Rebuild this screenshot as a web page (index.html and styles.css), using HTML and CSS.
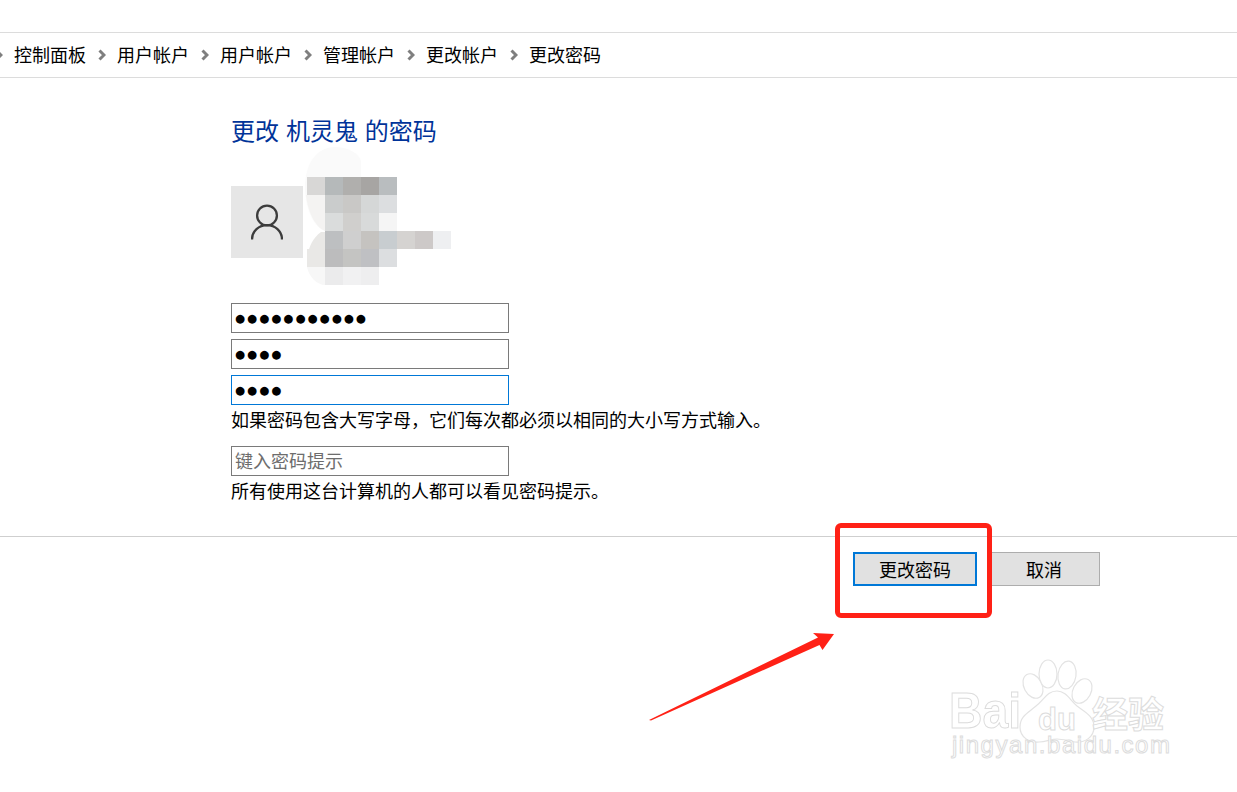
FILE: index.html
```html
<!DOCTYPE html>
<html lang="zh-CN">
<head>
<meta charset="utf-8">
<title>更改密码</title>
<link rel="stylesheet" href="styles.css">
</head>
<body>
<div class="page">
  <div class="topbar"></div>
  <nav class="crumbs">
    <span class="sep sep-first"><svg class="chev" viewBox="0 0 8 12"><path d="M1.500 1.500 6 6l-4.500 4.500"/></svg></span><span class="crumb">控制面板</span>
    <span class="sep"><svg class="chev" viewBox="0 0 8 12"><path d="M1.500 1.500 6 6l-4.500 4.500"/></svg></span><span class="crumb">用户帐户</span>
    <span class="sep"><svg class="chev" viewBox="0 0 8 12"><path d="M1.500 1.500 6 6l-4.500 4.500"/></svg></span><span class="crumb">用户帐户</span>
    <span class="sep"><svg class="chev" viewBox="0 0 8 12"><path d="M1.500 1.500 6 6l-4.500 4.500"/></svg></span><span class="crumb">管理帐户</span>
    <span class="sep"><svg class="chev" viewBox="0 0 8 12"><path d="M1.500 1.500 6 6l-4.500 4.500"/></svg></span><span class="crumb">更改帐户</span>
    <span class="sep"><svg class="chev" viewBox="0 0 8 12"><path d="M1.500 1.500 6 6l-4.500 4.500"/></svg></span><span class="crumb">更改密码</span>
  </nav>
  <main class="content">
    <h1 class="title">更改 机灵鬼 的密码</h1>
    <div class="user">
      <div class="avatar">
        <svg class="avatar-icon" viewBox="0 0 32 36"><circle cx="16" cy="11.500" r="9.900"/><path d="M1 35.500C1 27 8 21.200 16 21.200S31 27 31 35.500"/></svg>
      </div>
    </div>
    <form class="fields">
      <div class="field"><span class="dots">●●●●●●●●●●●</span></div>
      <div class="field"><span class="dots">●●●●</span></div>
      <div class="field field-focus"><span class="dots">●●●●</span></div>
      <p class="note">如果密码包含大写字母，它们每次都必须以相同的大小写方式输入。</p>
      <div class="field field-hint"><span class="placeholder">键入密码提示</span></div>
      <p class="note">所有使用这台计算机的人都可以看见密码提示。</p>
    </form>
  </main>
  <footer class="actions">
    <button class="btn btn-primary" type="button">更改密码</button>
    <button class="btn btn-cancel" type="button">取消</button>
  </footer>

  <svg class="mosaic" width="160" height="150" viewBox="0 0 160 150">
    <path class="ghost" d="M2 40C2 15 15 0 32 0c12 0 24 6 26 14v16L22 84C10 80 2 60 2 40z"/>
    <path class="lobe" d="M18 85C8 92 4 105 4 115h18V85z"/>
    <path class="lobe" d="M4 102h18v18H4z"/>
    <path class="lobe-soft" d="M4 120h18v18c-8 0-16-8-18-18z"/>
    <path class="lobe-upper" d="M3 48h19v36C12 80 5 65 3 48z"/>
    <g>
      <rect x="4" y="30" width="18" height="18" fill="#d8d7d6"/><rect x="22" y="30" width="18" height="18" fill="#b5b9ba"/><rect x="40" y="30" width="18" height="18" fill="#b0afad"/><rect x="58" y="30" width="18" height="18" fill="#a7a5a3"/><rect x="76" y="30" width="18" height="18" fill="#b9bdbf"/>
      <rect x="22" y="48" width="18" height="18" fill="#cacccc"/><rect x="40" y="48" width="18" height="18" fill="#c9c8c6"/><rect x="58" y="48" width="18" height="18" fill="#d5d7d7"/><rect x="76" y="48" width="18" height="18" fill="#dcdee0"/>
      <rect x="22" y="66" width="18" height="18" fill="#dadcdc"/><rect x="40" y="66" width="18" height="18" fill="#d0cfcd"/><rect x="58" y="66" width="18" height="18" fill="#d8dada"/><rect x="76" y="66" width="18" height="18" fill="#f5f5f5"/>
      <rect x="22" y="84" width="18" height="18" fill="#bdbfc1"/><rect x="40" y="84" width="18" height="18" fill="#cfcfcf"/><rect x="58" y="84" width="18" height="18" fill="#c5c3c0"/><rect x="76" y="84" width="18" height="18" fill="#c8cdd0"/><rect x="94" y="84" width="18" height="18" fill="#d5d3d1"/><rect x="112" y="84" width="18" height="18" fill="#cdc9c8"/><rect x="130" y="84" width="18" height="18" fill="#eeeff1"/>
      <rect x="22" y="102" width="18" height="18" fill="#bcbcbd"/><rect x="40" y="102" width="18" height="18" fill="#c4c4c2"/><rect x="58" y="102" width="18" height="18" fill="#bfc0c3"/><rect x="76" y="102" width="18" height="18" fill="#dcdee0"/>
      <rect x="22" y="120" width="18" height="18" fill="#ebebec"/><rect x="40" y="120" width="18" height="18" fill="#f1f1f2"/><rect x="58" y="120" width="18" height="18" fill="#eeeeef"/>
    </g>
  </svg>

  <div class="red-box"></div>
  <svg class="arrow" width="190" height="92" viewBox="0 0 190 92">
    <path d="M1 90 3 90.500 171.500 15 174.500 20 186 4 165 3 170 7.500z"/>
  </svg>

  <svg class="watermark" width="240" height="115" viewBox="0 0 240 115">
    <g class="wm-shape">
      <ellipse cx="93" cy="31" rx="9" ry="13" transform="rotate(-28 93 31)"/>
      <ellipse cx="108" cy="19" rx="9" ry="14"/>
      <ellipse cx="127" cy="20" rx="9" ry="14" transform="rotate(8 127 20)"/>
      <ellipse cx="142" cy="36" rx="9" ry="13" transform="rotate(28 142 36)"/>
      <path d="M117 36c9 0 13 9 20 15 8 6 17 10 17 21 0 10-9 16-19 15-7-1-12-3-18-3s-11 3-18 3c-10 1-19-5-19-15 0-11 8-14 16-21 8-6 11-15 21-15z"/>
    </g>
    <text class="wm-big" x="9" y="73" textLength="72" lengthAdjust="spacingAndGlyphs">Bai</text>
    <text class="wm-du" x="98" y="75" textLength="38" lengthAdjust="spacingAndGlyphs">du</text>
    <text class="wm-cn" x="152" y="73">经验</text>
    <text class="wm-url" x="12" y="98" textLength="218" lengthAdjust="spacing">jingyan.baidu.com</text>
  </svg>
</div>
</body>
</html>
```
FILE: styles.css
```css
* { box-sizing: border-box; }

html, body {
  margin: 0;
  padding: 0;
  background: #fff;
}

body {
  font-family: "Noto Sans CJK SC", "Liberation Sans", sans-serif;
  color: #000;
  overflow: hidden;
}

.page {
  position: relative;
  width: 1237px;
  height: 792px;
  overflow: hidden;
}

.topbar { height: 32px; }

.crumbs {
  display: flex;
  align-items: center;
  height: 46px;
  padding-bottom: 3px;
  border-top: 1px solid #dcdcdc;
  border-bottom: 1px solid #dcdcdc;
  font-size: 18px;
  line-height: 26px;
  white-space: nowrap;
}

.sep {
  display: flex;
  justify-content: center;
  width: 31px;
}

.sep-first { margin-left: -17px; }

.chev {
  width: 8px;
  height: 12px;
  margin-top: 3px;
}

.chev path {
  fill: none;
  stroke: #7f7f7f;
  stroke-width: 3;
}

.content {
  padding: 35px 0 0 231px;
  height: 458px;
}

.title {
  margin: 0;
  font-size: 24px;
  font-weight: 400;
  line-height: 34px;
  color: #003399;
  word-spacing: 1.500px;
}

.user {
  margin-top: 39px;
  height: 117px;
}

.avatar {
  display: flex;
  align-items: center;
  justify-content: center;
  width: 72px;
  height: 72px;
  background: #e6e6e6;
}

.avatar-icon {
  width: 32px;
  height: 36px;
}

.avatar-icon circle,
.avatar-icon path {
  fill: none;
  stroke: #3c3c3c;
  stroke-width: 2.300;
}

.fields {
  display: flex;
  flex-direction: column;
}

.field {
  display: flex;
  align-items: center;
  width: 278px;
  height: 30px;
  margin-bottom: 6px;
  padding-left: 3px;
  border: 1px solid #7a7a7a;
  background: #fff;
}

.field-focus {
  margin-bottom: 0;
  border-color: #0078d7;
}

.field-hint {
  margin: 10px 0 0;
  padding-bottom: 2px;
}

.dots {
  padding-top: 2px;
  font-family: "DejaVu Sans", sans-serif;
  font-size: 11.500px;
  letter-spacing: 2.050px;
  line-height: 1;
}

.placeholder {
  font-size: 18px;
  line-height: 26px;
  color: #6d6d6d;
}

.note {
  margin: 0;
  height: 31px;
  font-size: 18px;
  line-height: 29px;
  white-space: nowrap;
}

.fields .note:last-child { height: 30px; line-height: 28px; }

.actions {
  display: flex;
  justify-content: flex-end;
  gap: 11px;
  height: 60px;
  padding: 15px 137px 0 0;
  border-top: 1px solid #cfcfcf;
}

.btn {
  height: 34px;
  margin: 0;
  padding: 0;
  font-family: inherit;
  font-size: 18px;
  line-height: 26px;
  color: #000;
  background: #e1e1e1;
  border: 1px solid #adadad;
}

.btn-primary {
  width: 124px;
  border: 2px solid #0078d7;
}

.btn-cancel { width: 112px; }

.mosaic {
  position: absolute;
  left: 303px;
  top: 147px;
}

.ghost { fill: #fafafa; }
.lobe { fill: #e9e8e6; }
.lobe-soft { fill: #f7f7f7; }
.lobe-upper { fill: #f4f3f2; }

.red-box {
  position: absolute;
  left: 835px;
  top: 523px;
  width: 157px;
  height: 95px;
  border: 5px solid #ff2116;
  border-radius: 6px;
}

.arrow {
  position: absolute;
  left: 648px;
  top: 630px;
}

.arrow path { fill: #ff2116; }

.watermark {
  position: absolute;
  left: 940px;
  top: 655px;
}

.wm-shape {
  fill: #fff;
  stroke: #e3e3e3;
  stroke-width: 1.200;
}

.watermark text {
  fill: #fff;
  stroke: #dcdcdc;
  stroke-width: 1;
  font-family: "Liberation Sans", sans-serif;
  font-weight: 700;
}

.watermark .wm-big { font-size: 50px; }
.watermark .wm-du { font-size: 32px; }
.watermark .wm-cn { font-family: "Noto Sans CJK SC", sans-serif; font-size: 36px; }
.watermark .wm-url { font-size: 24px; font-weight: 400; }
```
